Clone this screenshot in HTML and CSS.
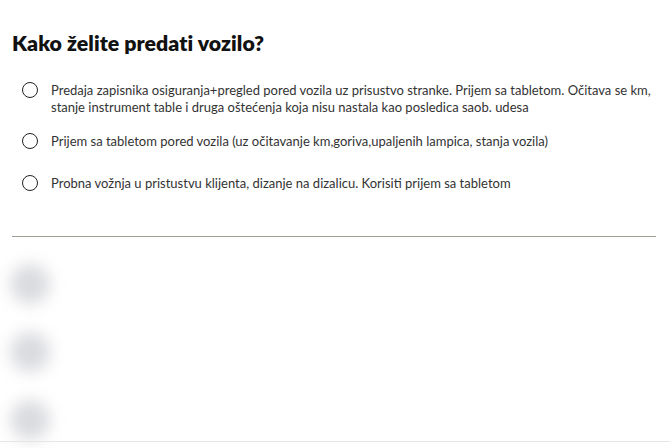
FILE: index.html
```html
<!DOCTYPE html>
<html>
<head>
<meta charset="utf-8">
<link rel="stylesheet" href="styles.css">
</head>
<body>
<div class="page">
  <h1 class="title">Kako želite predati vozilo?</h1>
  <div class="options">
    <label class="option">
      <span class="radio"></span>
      <span class="text">Predaja zapisnika osiguranja+pregled pored vozila uz prisustvo stranke. Prijem sa tabletom. Očitava se km, stanje instrument table i druga oštećenja koja nisu nastala kao posledica saob. udesa</span>
    </label>
    <label class="option">
      <span class="radio"></span>
      <span class="text">Prijem sa tabletom pored vozila (uz očitavanje km,goriva,upaljenih lampica, stanja vozila)</span>
    </label>
    <label class="option">
      <span class="radio"></span>
      <span class="text">Probna vožnja u pristustvu klijenta, dizanje na dizalicu. Korisiti prijem sa tabletom</span>
    </label>
  </div>
  <hr class="divider">
  <div class="skeleton">
    <div class="blob"></div>
    <div class="blob"></div>
    <div class="blob"></div>
  </div>
</div>
<div class="bottom-line"></div>
</body>
</html>
```

FILE: styles.css
```css
html, body {
  margin: 0;
  padding: 0;
  background: #ffffff;
  overflow: hidden;
}
body {
  width: 672px;
  height: 448px;
  position: relative;
  font-family: "Lato", "Open Sans", sans-serif;
  color: #333333;
}
.page {
  padding: 0 16px 0 12px;
}
.title {
  margin: 0;
  padding-top: 31px;
  font-size: 21.3px;
  line-height: 24px;
  font-weight: 800;
  color: #111111;
  letter-spacing: 0.05px;
}
.options {
  display: flex;
  flex-direction: column;
  gap: 17px;
  margin-top: 27px;
}
.option {
  display: flex;
  align-items: flex-start;
  gap: 13px;
  padding-left: 10px;
  min-height: 25px;
}
.radio {
  flex: none;
  width: 14px;
  height: 14px;
  border: 1.5px solid #222222;
  border-radius: 50%;
}
.text {
  font-size: 13px;
  line-height: 17px;
  color: #333333;
}
.divider {
  margin: 36px 0 0 0;
  border: none;
  border-top: 1px solid #a29f97;
  height: 0;
}
.skeleton {
  display: flex;
  flex-direction: column;
  gap: 28px;
  margin-left: -2px;
  margin-top: 27px;
}
.blob {
  width: 40px;
  height: 40px;
  border-radius: 50%;
  background: #dadbdf;
  filter: blur(8px);
}
.bottom-line {
  position: absolute;
  left: 0;
  right: 2px;
  top: 441px;
  height: 1px;
  background: #e6e6e6;
}
```
